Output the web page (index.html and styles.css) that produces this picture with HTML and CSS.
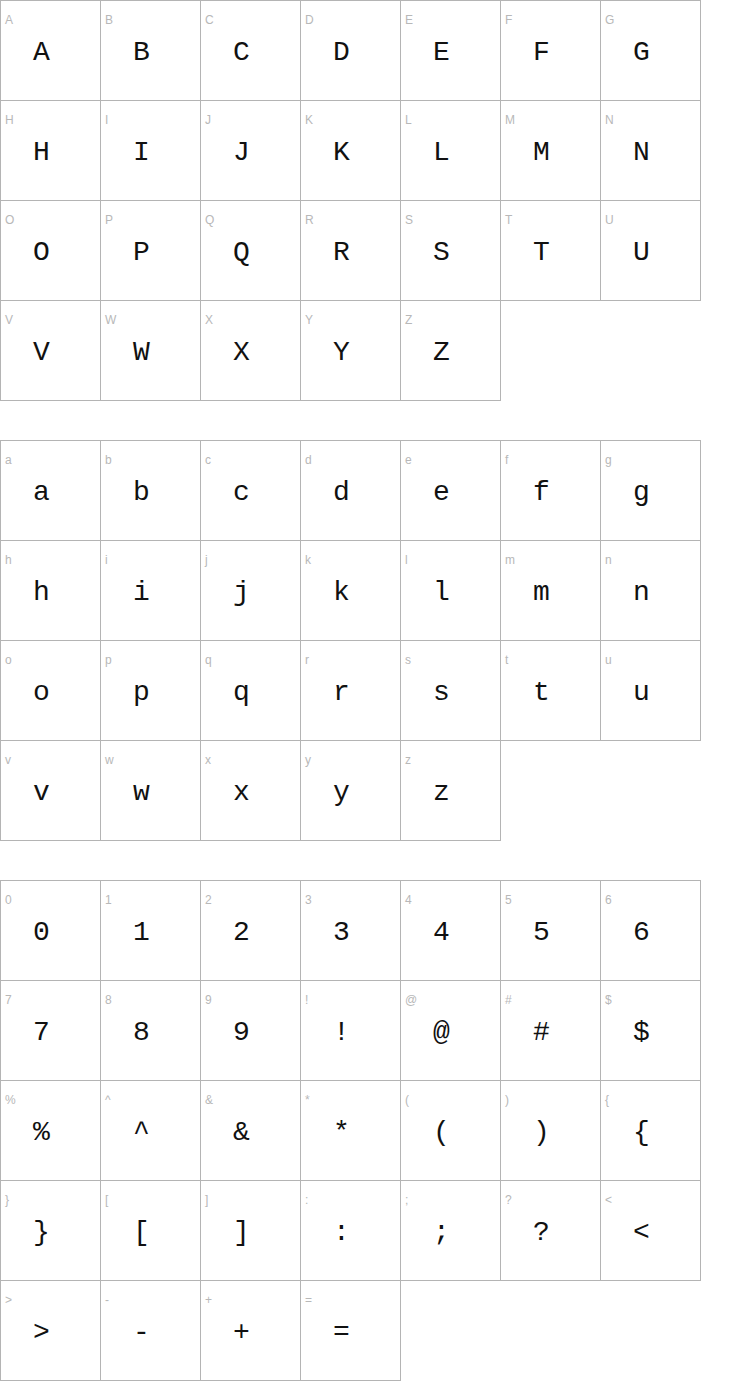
FILE: index.html
```html
<!DOCTYPE html>
<html>
<head>
<meta charset="utf-8">
<link rel="stylesheet" href="styles.css">
</head>
<body>
<div class="grid">
<div class="cell"><span class="lbl">A</span><span class="gl">A</span></div>
<div class="cell"><span class="lbl">B</span><span class="gl">B</span></div>
<div class="cell"><span class="lbl">C</span><span class="gl">C</span></div>
<div class="cell"><span class="lbl">D</span><span class="gl">D</span></div>
<div class="cell"><span class="lbl">E</span><span class="gl">E</span></div>
<div class="cell"><span class="lbl">F</span><span class="gl">F</span></div>
<div class="cell"><span class="lbl">G</span><span class="gl">G</span></div>
<div class="cell"><span class="lbl">H</span><span class="gl">H</span></div>
<div class="cell"><span class="lbl">I</span><span class="gl">I</span></div>
<div class="cell"><span class="lbl">J</span><span class="gl">J</span></div>
<div class="cell"><span class="lbl">K</span><span class="gl">K</span></div>
<div class="cell"><span class="lbl">L</span><span class="gl">L</span></div>
<div class="cell"><span class="lbl">M</span><span class="gl">M</span></div>
<div class="cell"><span class="lbl">N</span><span class="gl">N</span></div>
<div class="cell"><span class="lbl">O</span><span class="gl">O</span></div>
<div class="cell"><span class="lbl">P</span><span class="gl">P</span></div>
<div class="cell"><span class="lbl">Q</span><span class="gl">Q</span></div>
<div class="cell"><span class="lbl">R</span><span class="gl">R</span></div>
<div class="cell"><span class="lbl">S</span><span class="gl">S</span></div>
<div class="cell"><span class="lbl">T</span><span class="gl">T</span></div>
<div class="cell"><span class="lbl">U</span><span class="gl">U</span></div>
<div class="cell"><span class="lbl">V</span><span class="gl">V</span></div>
<div class="cell"><span class="lbl">W</span><span class="gl">W</span></div>
<div class="cell"><span class="lbl">X</span><span class="gl">X</span></div>
<div class="cell"><span class="lbl">Y</span><span class="gl">Y</span></div>
<div class="cell"><span class="lbl">Z</span><span class="gl">Z</span></div>
</div>
<div class="grid">
<div class="cell"><span class="lbl">a</span><span class="gl">a</span></div>
<div class="cell"><span class="lbl">b</span><span class="gl">b</span></div>
<div class="cell"><span class="lbl">c</span><span class="gl">c</span></div>
<div class="cell"><span class="lbl">d</span><span class="gl">d</span></div>
<div class="cell"><span class="lbl">e</span><span class="gl">e</span></div>
<div class="cell"><span class="lbl">f</span><span class="gl">f</span></div>
<div class="cell"><span class="lbl">g</span><span class="gl">g</span></div>
<div class="cell"><span class="lbl">h</span><span class="gl">h</span></div>
<div class="cell"><span class="lbl">i</span><span class="gl">i</span></div>
<div class="cell"><span class="lbl">j</span><span class="gl">j</span></div>
<div class="cell"><span class="lbl">k</span><span class="gl">k</span></div>
<div class="cell"><span class="lbl">l</span><span class="gl">l</span></div>
<div class="cell"><span class="lbl">m</span><span class="gl">m</span></div>
<div class="cell"><span class="lbl">n</span><span class="gl">n</span></div>
<div class="cell"><span class="lbl">o</span><span class="gl">o</span></div>
<div class="cell"><span class="lbl">p</span><span class="gl">p</span></div>
<div class="cell"><span class="lbl">q</span><span class="gl">q</span></div>
<div class="cell"><span class="lbl">r</span><span class="gl">r</span></div>
<div class="cell"><span class="lbl">s</span><span class="gl">s</span></div>
<div class="cell"><span class="lbl">t</span><span class="gl">t</span></div>
<div class="cell"><span class="lbl">u</span><span class="gl">u</span></div>
<div class="cell"><span class="lbl">v</span><span class="gl">v</span></div>
<div class="cell"><span class="lbl">w</span><span class="gl">w</span></div>
<div class="cell"><span class="lbl">x</span><span class="gl">x</span></div>
<div class="cell"><span class="lbl">y</span><span class="gl">y</span></div>
<div class="cell"><span class="lbl">z</span><span class="gl">z</span></div>
</div>
<div class="grid">
<div class="cell"><span class="lbl">0</span><span class="gl">0</span></div>
<div class="cell"><span class="lbl">1</span><span class="gl">1</span></div>
<div class="cell"><span class="lbl">2</span><span class="gl">2</span></div>
<div class="cell"><span class="lbl">3</span><span class="gl">3</span></div>
<div class="cell"><span class="lbl">4</span><span class="gl">4</span></div>
<div class="cell"><span class="lbl">5</span><span class="gl">5</span></div>
<div class="cell"><span class="lbl">6</span><span class="gl">6</span></div>
<div class="cell"><span class="lbl">7</span><span class="gl">7</span></div>
<div class="cell"><span class="lbl">8</span><span class="gl">8</span></div>
<div class="cell"><span class="lbl">9</span><span class="gl">9</span></div>
<div class="cell"><span class="lbl">!</span><span class="gl">!</span></div>
<div class="cell"><span class="lbl">@</span><span class="gl">@</span></div>
<div class="cell"><span class="lbl">#</span><span class="gl">#</span></div>
<div class="cell"><span class="lbl">$</span><span class="gl">$</span></div>
<div class="cell"><span class="lbl">%</span><span class="gl">%</span></div>
<div class="cell"><span class="lbl">^</span><span class="gl">^</span></div>
<div class="cell"><span class="lbl">&amp;</span><span class="gl">&amp;</span></div>
<div class="cell"><span class="lbl">*</span><span class="gl">*</span></div>
<div class="cell"><span class="lbl">(</span><span class="gl">(</span></div>
<div class="cell"><span class="lbl">)</span><span class="gl">)</span></div>
<div class="cell"><span class="lbl">{</span><span class="gl">{</span></div>
<div class="cell"><span class="lbl">}</span><span class="gl">}</span></div>
<div class="cell"><span class="lbl">[</span><span class="gl">[</span></div>
<div class="cell"><span class="lbl">]</span><span class="gl">]</span></div>
<div class="cell"><span class="lbl">:</span><span class="gl">:</span></div>
<div class="cell"><span class="lbl">;</span><span class="gl">;</span></div>
<div class="cell"><span class="lbl">?</span><span class="gl">?</span></div>
<div class="cell"><span class="lbl">&lt;</span><span class="gl">&lt;</span></div>
<div class="cell"><span class="lbl">&gt;</span><span class="gl">&gt;</span></div>
<div class="cell"><span class="lbl">-</span><span class="gl">-</span></div>
<div class="cell"><span class="lbl">+</span><span class="gl">+</span></div>
<div class="cell"><span class="lbl">=</span><span class="gl">=</span></div>
</div>
</body>
</html>
```
FILE: styles.css
```css
html, body {
  margin: 0;
  padding: 0;
  background: #ffffff;
}
body {
  font-family: "Liberation Sans", Arial, sans-serif;
}
.grid {
  display: flex;
  flex-wrap: wrap;
  width: 701px;
  margin-bottom: 40px;
}
.cell {
  box-sizing: border-box;
  width: 101px;
  height: 101px;
  margin: 0 -1px -1px 0;
  border: 1px solid #b4b4b4;
  display: flex;
  flex-direction: column;
}
.lbl {
  font-family: "Liberation Sans", Arial, sans-serif;
  font-size: 12px;
  line-height: 13px;
  color: #b8b8b8;
  padding: 13px 0 0 4px;
  height: 13px;
}
.gl {
  font-family: "Liberation Mono", "DejaVu Sans Mono", monospace;
  font-size: 28px;
  line-height: 30px;
  color: #111111;
  padding: 11px 0 0 32px;
}
```
